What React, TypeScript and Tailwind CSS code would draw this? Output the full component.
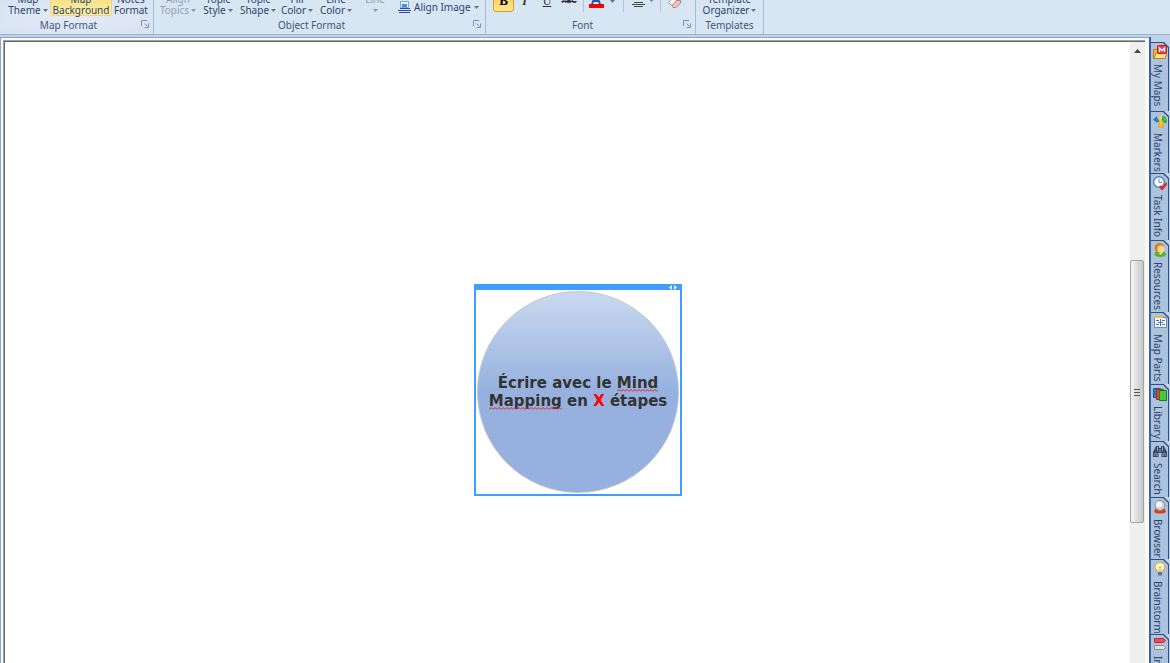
import type { ReactNode } from "react";

function Caret({ dim = false }: { dim?: boolean }) {
  return (
    <svg width="5" height="3" viewBox="0 0 5 3" className={dim ? "text-[#8d98a8]" : "text-[#66758c]"}>
      <path d="M0 0h5L2.5 3z" fill="currentColor" />
    </svg>
  );
}

function Launcher() {
  return (
    <button type="button" aria-label="More options" className="absolute right-1 top-1 size-2">
      <svg width="8" height="8" viewBox="0 0 8 8" fill="none" stroke="#8492a8">
        <path d="M.5 6V.5H6M3.500 3.500l3 3M7.500 3.500v4h-4" />
      </svg>
    </button>
  );
}

type GroupProps = { title: string; width: string; launcher?: boolean; glow?: boolean; children: ReactNode };

function Group({ title, width, launcher = true, glow = false, children }: GroupProps) {
  return (
    <section
      className={`flex shrink-0 flex-col justify-end border-r border-[#a9bbd3] ${width} ${
        glow ? "bg-radial from-[#e6ebf5] to-[#d6e3f3]" : ""
      }`}
    >
      <div className="flex h-4 items-end">{children}</div>
      <div className={`relative h-[18px] text-center leading-[18px] text-[#3f5980] ${launcher ? "pr-4" : ""}`}>
        {title}
        {launcher && <Launcher />}
      </div>
    </section>
  );
}

type BigProps = { top: string; bottom?: string; width: string; caret?: boolean; disabled?: boolean; active?: boolean };

function BigButton({ top, bottom, width, caret = true, disabled = false, active = false }: BigProps) {
  return (
    <button
      type="button"
      disabled={disabled}
      className={`flex h-8 shrink-0 flex-col items-center justify-end whitespace-nowrap leading-[11px] ${width} ${
        disabled ? "text-[#949fb0]" : "text-[#2b466f]"
      } ${
        active
          ? "rounded-[3px] bg-linear-to-b from-[#f3d36c] to-[#fff0a8] shadow-[inset_0_0_0_1px_#ecd58b]"
          : ""
      }`}
    >
      <span>{top}</span>
      <span className="flex h-[11px] items-center gap-[2px]">
        {bottom}
        {caret && <Caret dim={disabled} />}
      </span>
    </button>
  );
}

function Separator() {
  return <span className="mb-1 h-4 w-px shrink-0 bg-[#b4c3d8]" />;
}

function Ribbon() {
  return (
    <header className="flex h-[35px] shrink-0 overflow-hidden border-b border-[#9db3cf] bg-[#d8e5f3] text-[10px]">
      <Group title="Map Format" width="w-[154px]" glow>
        <span className="w-[6px]" />
        <BigButton top="Map" bottom="Theme" width="w-[44px]" />
        <BigButton top="Map" bottom="Background" width="w-[62px]" caret={false} active />
        <BigButton top="Notes" bottom="Format" width="w-[38px]" caret={false} />
      </Group>
      <Group title="Object Format" width="w-[332px]">
        <span className="w-1" />
        <BigButton top="Align" bottom="Topics" width="w-[40px]" disabled />
        <BigButton top="Topic" bottom="Style" width="w-[40px]" />
        <BigButton top="Topic" bottom="Shape" width="w-[40px]" />
        <BigButton top="Fill" bottom="Color" width="w-[38px]" />
        <BigButton top="Line" bottom="Color" width="w-[40px]" />
        <BigButton top="Line" width="w-[38px]" disabled />
        <button
          type="button"
          className="mb-px flex h-4 items-center gap-[3px] whitespace-nowrap pl-1 text-[#2b466f]"
        >
          <svg width="13" height="12" viewBox="0 0 13 12">
            <path d="M2.500.5h8v6h-8z" fill="#e8f4ff" stroke="#8da4c1" />
            <path d="M4 3h5v3H4z" fill="#2d9cf0" />
            <path d="M2 7.500h10M0 9.500h13M1 11.500h11" stroke="#3540a8" />
          </svg>
          Align Image
          <Caret />
        </button>
      </Group>
      <Group title="Font" width="w-[210px]">
        <div className="flex h-4 w-full items-end pl-[7px] text-[#333]">
          <button
            type="button"
            className="mb-1 flex h-5 w-[21px] items-end justify-center rounded-[3px] border border-[#c9a23b] bg-linear-to-b from-[#f8c84a] to-[#ffe88a] pb-1 font-['Liberation_Serif'] text-[13px] leading-3 font-bold text-black"
          >
            B
          </button>
          <button
            type="button"
            className="mb-[9px] h-3 w-[21px] font-['Liberation_Serif'] text-[12px] leading-3 font-bold italic"
          >
            I
          </button>
          <button
            type="button"
            className="mb-[9px] h-3 w-[24px] font-['Liberation_Serif'] text-[12px] leading-3 underline"
          >
            U
          </button>
          <button
            type="button"
            className="mb-[9px] h-3 w-[20px] font-['Liberation_Sans'] text-[7px] leading-3 font-bold line-through"
          >
            ABC
          </button>
          <span className="w-[4px]" />
          <Separator />
          <button type="button" aria-label="Font color" className="mb-2 flex w-[36px] items-start justify-center gap-[6px]">
            <svg width="15" height="14" viewBox="0 0 15 14">
              <path d="M3 10 7 0l4 10M5 7h5" fill="none" stroke="#2456a5" strokeWidth="2" />
              <path d="M0 10h15v4H0z" fill="#f60000" />
            </svg>
            <span className="flex h-[14px] items-center">
              <Caret />
            </span>
          </button>
          <span className="w-[3px]" />
          <Separator />
          <button type="button" aria-label="Alignment" className="mb-[9px] ml-1 flex w-[30px] items-center justify-center gap-1">
            <svg width="13" height="14" viewBox="0 0 13 14" stroke="#444">
              <path d="M2 9.500h9M0 11.500h13M2 13.500h9" />
            </svg>
            <Caret />
          </button>
          <span className="w-[2px]" />
          <Separator />
          <button type="button" aria-label="Clear formatting" className="mb-2 ml-[6px]">
            <svg width="15" height="14" viewBox="0 0 15 14">
              <path d="M1 8.500 6 4l4 3-5 4.500z" fill="#fffaf6" stroke="#a39a9c" />
              <path d="m5 11.500 5-5h3.500v2.500l-4.500 4.500H6z" fill="#f0c9bd" stroke="#a98480" />
            </svg>
          </button>
        </div>
      </Group>
      <Group title="Templates" width="w-[68px]" launcher={false}>
        <BigButton top="Template" bottom="Organizer" width="w-[67px]" />
      </Group>
    </header>
  );
}

const TABS: { label: string; height: string; icon: ReactNode }[] = [
  {
    label: "My Maps",
    height: "h-[69px]",
    icon: (
      <>
        <path d="M.5 4.500h4l1 1h6v8H.500z" fill="#f2bd3c" stroke="#b98212" />
        <path d="M1 13.500 3 8h11l-2 5.500z" fill="#ffe07a" stroke="#b98212" />
        <rect x="4.500" y=".5" width="9" height="8" rx="1" fill="#f23c42" stroke="#c7222b" />
        <path d="M6.500 7V3L9 5.500 11.500 3v4" fill="none" stroke="#fff" strokeWidth="1.300" />
      </>
    ),
  },
  {
    label: "Markers",
    height: "h-[62px]",
    icon: (
      <>
        <path d="M0 5.500 4 2v2h4v4H4v1z" fill="#2879dc" />
        <path d="M6 5h4v9H6z" fill="#f9bf2d" stroke="#d58c0c" strokeWidth=".6" />
        <path d="M4.500 5.500 8 1.500 11 5.500z" fill="#ffd452" />
        <path d="m9 2 3 .5 2.500 5-2.500 2L9 6z" fill="#24ad35" />
        <path d="m10 3.500 3 3" stroke="#8ce277" />
      </>
    ),
  },
  {
    label: "Task Info",
    height: "h-[67px]",
    icon: (
      <>
        <circle cx="6" cy="6" r="5.300" fill="#fff" stroke="#4c82c5" strokeWidth="1.400" />
        <path d="M6 2.500v4h3" fill="none" stroke="#6d87a6" />
        <path d="m7 10 2 3 5-6" fill="none" stroke="#e02a22" strokeWidth="2.400" />
      </>
    ),
  },
  {
    label: "Resources",
    height: "h-[72px]",
    icon: (
      <>
        <path d="M1.500 12c0-3 2-4 5.500-4s6 1 6 4c-2 2.500-9.500 2.500-11.500 0z" fill="#51b530" />
        <path d="m5 9 2.500 3L10 9z" fill="#e4f7bf" />
        <circle cx="6.500" cy="5" r="5" fill="#d98212" />
        <circle cx="8" cy="6" r="3.500" fill="#ffd994" />
      </>
    ),
  },
  {
    label: "Map Parts",
    height: "h-[72px]",
    icon: (
      <>
        <path d="M1.500 2.500h12v10h-12z" fill="#fafcff" stroke="#6c86ad" />
        <path d="M1 1h9v2H1z" fill="#eeb744" />
        <path d="M7.500 4v7M3 5.500h3M3 9.500h3M9 5.500h3M9 9.500h3M5 7.500h5" stroke="#3d72b8" />
      </>
    ),
  },
  {
    label: "Library",
    height: "h-[57px]",
    icon: (
      <>
        <path d="M.5 1.500h7v9h-7z" fill="#3474c8" stroke="#225295" />
        <path d="M3.500 2.500h7v10h-7z" fill="#e4462e" stroke="#a62b1a" />
        <path d="M6.500 3.500h7v10h-7z" fill="#43ca39" stroke="#1c7d22" />
      </>
    ),
  },
  {
    label: "Search",
    height: "h-[56px]",
    icon: (
      <>
        <path d="M3 2h3v2h2V2h3l3 6v5H8.500V9h-3v4H0V8z" fill="#3b4c68" />
        <path d="M4.500 3v4M9.500 3v4M2 9v3M4 9v3M10 9v3M12 9v3M7 5v3" stroke="#a9bad1" strokeWidth=".8" />
      </>
    ),
  },
  {
    label: "Browser",
    height: "h-[62px]",
    icon: (
      <>
        <path d="M2 9h10l1 3c-2 2-10 2-12 0z" fill="#e63d1b" />
        <circle cx="7" cy="5.500" r="5" fill="#c7d2d3" stroke="#829296" />
        <circle cx="6" cy="4.500" r="3" fill="#f7fbfb" />
      </>
    ),
  },
  {
    label: "Brainstorm",
    height: "h-[75px]",
    icon: (
      <>
        <path d="M5 9C0 6 2 .5 7 .5S14 6 9 9v2H5z" fill="#fff7cc" stroke="#d39c32" />
        <path d="M5.500 4.500 7 6l1.500-1.500M7 6v4" fill="none" stroke="#e7a31c" />
        <path d="M5.500 10.500h3v2.500h-3z" fill="#678bc0" stroke="#486b9c" />
      </>
    ),
  },
  {
    label: "Index",
    height: "h-[62px]",
    icon: (
      <>
        <path d="M1.500 1.500h9l2 2-2 2h-9z" fill="#f04d58" stroke="#ca2633" />
        <path d="M1.500 8.500h9l2 2-2 2h-9z" fill="#e1dfdc" stroke="#8e8e8e" />
      </>
    ),
  },
];

function SideTabs() {
  return (
    <nav className="w-[21px] shrink-0 overflow-hidden border-l-2 border-[#3d639a] bg-[#bfd2e8] pt-[5px] text-[10px] text-[#2a456f]">
      {TABS.map((tab) => (
        <button
          key={tab.label}
          type="button"
          className={`relative flex w-[18px] flex-col items-center border-t border-r border-[#2d4f83] bg-[#adc2dc] pt-[2px] ${tab.height}`}
        >
          <svg width="14" height="14" viewBox="0 0 14 14" className="shrink-0">
            {tab.icon}
          </svg>
          <span className="mt-[5px] mr-1 leading-3 whitespace-nowrap [writing-mode:vertical-rl]">{tab.label}</span>
          <svg width="6" height="6" viewBox="0 0 6 6" className="absolute -top-px -right-px">
            <path d="M0 0h6v6z" fill="#bfd2e8" />
            <path d="m0 0 6 6" stroke="#2d4f83" strokeWidth="1.300" />
          </svg>
        </button>
      ))}
    </nav>
  );
}

function Misspelled({ children }: { children: string }) {
  return (
    <span className="relative inline-block">
      {children}
      <svg className="absolute bottom-0 left-0 h-[3px] w-full" aria-hidden="true">
        <defs>
          <pattern id={`wave-${children}`} width="4" height="3" patternUnits="userSpaceOnUse">
            <path d="M0 2.500 2 .5l2 2" fill="none" stroke="#f01818" />
          </pattern>
        </defs>
        <rect width="100%" height="3" fill={`url(#wave-${children})`} />
      </svg>
    </span>
  );
}

function CentralTopic() {
  return (
    <div className="absolute top-[242px] left-[469px] w-[208px] border-2 border-t-0 border-[#409eff]">
      <div className="flex h-[6px] items-center justify-end bg-[#409eff] pr-[3px]">
        <svg width="8" height="5" viewBox="0 0 8 5" fill="#e5f2ff">
          <path d="M3 0v5L0 2.500zM5 0v5l3-2.500z" />
        </svg>
      </div>
      <div className="p-px">
        <div className="flex aspect-square items-center justify-center rounded-full border border-[#c3c6cc] bg-linear-to-b from-[#cad9f0] to-[#96b1df] to-50% text-center font-['DejaVu_Sans'] text-[15px] leading-[18px] font-bold whitespace-nowrap text-[#333]">
          <p>
            Écrire avec le <Misspelled>Mind</Misspelled>
            <br />
            <Misspelled>Mapping</Misspelled> en <span className="text-[#ff0000]">X</span> étapes
          </p>
        </div>
      </div>
    </div>
  );
}

function ScrollBar() {
  return (
    <div className="flex w-[15px] shrink-0 flex-col bg-[#efefef]">
      <button type="button" aria-label="Scroll up" className="flex h-[17px] items-center justify-center">
        <svg width="7" height="4" viewBox="0 0 7 4">
          <path d="M0 4h7L3.500 0z" fill="#444" />
        </svg>
      </button>
      <div className="flex-[202]" />
      <div className="flex w-[14px] flex-[262] flex-col items-center justify-center rounded-[2px] border border-[#a3a3a3] bg-linear-to-r from-[#f5f5f5] to-[#c6c6cb]">
        <svg width="6" height="8" viewBox="0 0 6 8" stroke="#555">
          <path d="M0 1.500h6M0 4.500h6M0 7.500h6" />
        </svg>
      </div>
      <div className="flex-[140]" />
    </div>
  );
}

export default function App() {
  return (
    <div className="flex h-screen flex-col overflow-hidden bg-[#bfd2e8] font-['Noto_Sans',sans-serif]">
      <Ribbon />
      <div className="flex min-h-0 flex-1 pt-[2px]">
        <div className="flex min-w-0 flex-1 border-t border-l border-[#8ba6c7] bg-[#f7f9fc] pt-[2px] pr-1 pl-[2px]">
          <div className="flex min-w-0 flex-1 border-t border-l border-[#a0a0a0]">
            <main className="flex min-w-0 flex-1 border-t border-l border-[#696969] bg-white">
              <div className="relative min-w-0 flex-1">
                <CentralTopic />
              </div>
              <ScrollBar />
            </main>
          </div>
        </div>
        <SideTabs />
      </div>
    </div>
  );
}
